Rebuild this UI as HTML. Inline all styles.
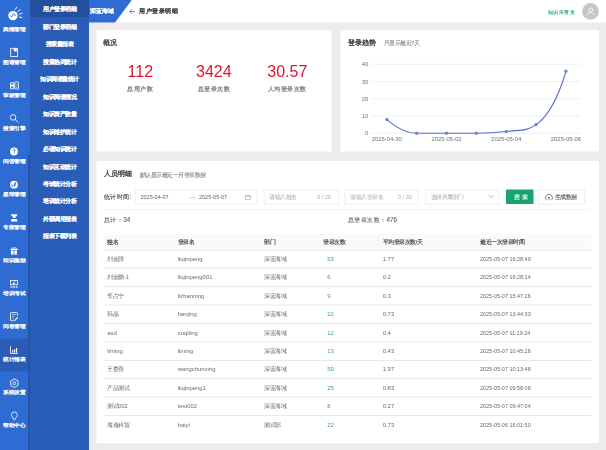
<!DOCTYPE html>
<html><head><meta charset="utf-8"><style>html,body{margin:0;padding:0;width:606px;height:450px;overflow:hidden;background:#ececec}#w{position:absolute;left:0;top:0;width:1212px;height:900px;transform:scale(0.5);transform-origin:0 0;overflow:hidden}
#w{font-family:"Liberation Sans",sans-serif}
#w div,#w svg{position:absolute}
#w div{-webkit-text-stroke:0.24px currentColor}
#w .bd{-webkit-text-stroke:0.1px currentColor}
#w .ttl{-webkit-text-stroke:0.6px currentColor}
#w .gk,#w .stl{-webkit-text-stroke:0.44px currentColor}
#w .th{-webkit-text-stroke:0.28px currentColor}
#w .td,#w .stn,#w .nst,#w .ph,#w .ax{-webkit-text-stroke:0}
#w .lb{-webkit-text-stroke:0.64px currentColor}
#w .m2{-webkit-text-stroke:0.2px currentColor}
.lb{left:0;width:56px;text-align:center;color:#fff;font-size:10.8px;line-height:12px;white-space:nowrap;transform:scaleY(0.86)}
.m2{left:60px;width:118px;text-align:center;color:#fff;font-size:11.2px;white-space:nowrap;line-height:16px;font-weight:bold}
.card{background:#fff}
.ttl{font-size:14px;color:#333;white-space:nowrap;line-height:16px;font-weight:normal}
.sub{font-size:11px;color:#999;white-space:nowrap;line-height:12px}
.stn{width:147.2px;text-align:center;font-size:32px;color:#e0142c;line-height:32px;white-space:nowrap}
.stl{width:147.2px;text-align:center;font-size:12.6px;color:#7a7a7a;line-height:16px;white-space:nowrap}
.inp{border:1px solid #dedede;border-radius:1px;background:#fff;height:28.4px;top:378.8px}
.ph{font-size:11px;color:#a8a8a8;white-space:nowrap;line-height:12px}
.th{font-size:11.2px;color:#3a3a3a;white-space:nowrap;line-height:12px}
.td{font-size:11.2px;color:#6a6a6a;white-space:nowrap;line-height:12px}
.g{color:#2aa982}
.ax{font-size:11.8px;color:#6e7079;white-space:nowrap;line-height:14px}
</style></head><body><div id="w">
<div style="left:0;top:0;width:60px;height:900px;background:#2e6bd2"></div>
<div style="left:0;top:676.6px;width:56px;height:66.8px;background:#2a5cb5"></div>
<div style="left:56px;top:310px;width:4px;height:590px;background:#2753a6"></div>
<div style="left:60px;top:0;width:118px;height:900px;background:#2a5db8"></div>
<div style="left:60px;top:0;width:118px;height:34px;background:#244f9e"></div>
<div class="lb" style="top:51.8px">舆情管理</div>
<div class="lb" style="top:117.86px">图谱管理</div>
<div class="lb" style="top:183.92px">审核管理</div>
<div class="lb" style="top:249.98px">搜索引擎</div>
<div class="lb" style="top:316.04px">问答管理</div>
<div class="lb" style="top:382.1px">星球管理</div>
<div class="lb" style="top:448.16px">专家管理</div>
<div class="lb" style="top:514.22px">知识激励</div>
<div class="lb" style="top:580.28px">培训考试</div>
<div class="lb" style="top:646.34px">问卷管理</div>
<div class="lb" style="top:712.4px">统计报表</div>
<div class="lb" style="top:778.46px">系统设置</div>
<div class="lb" style="top:844.52px">帮助中心</div>
<svg style="left:0;top:0" width="60px" height="900px" viewBox="0 0 30 450"><circle cx="13" cy="15.6" r="4.7" fill="#ffffff"/><polyline points="10.3,15.5 11.7,16.9 13.7,13.8 15.7,16" stroke="#2e6bd2" stroke-width="0.9" fill="none" stroke-linejoin="round"/><line x1="15.2" y1="9.6" x2="16.8" y2="7.3" stroke="#ffffff" stroke-width="0.9" stroke-linecap="round"/><line x1="18.1" y1="11.3" x2="20.3" y2="9.6" stroke="#ffffff" stroke-width="0.9" stroke-linecap="round"/><line x1="19.4" y1="14.2" x2="21.9" y2="13.3" stroke="#ffffff" stroke-width="0.9" stroke-linecap="round"/><line x1="19.4" y1="17.1" x2="21.9" y2="17.6" stroke="#ffffff" stroke-width="0.9" stroke-linecap="round"/><rect x="10.7" y="48.3" width="6.8" height="8.2" fill="none" stroke="#ffffff" stroke-width="0.85"/><rect x="13.8" y="48.6" width="3" height="2.8" fill="#ffffff"/><rect x="10" y="82.2" width="4.3" height="7.1" rx="1.3" fill="#ffffff"/><rect x="11" y="83" width="2.4" height="1.5" rx="0.5" fill="#2e6bd2"/><rect x="11" y="86.4" width="2.4" height="2" rx="0.6" fill="#2e6bd2"/><rect x="14.8" y="81.9" width="3.7" height="7.2" rx="0.4" fill="none" stroke="#ffffff" stroke-width="0.8"/><line x1="15.8" y1="84.2" x2="17.5" y2="84.2" stroke="#ffffff" stroke-width="0.5"/><line x1="15.8" y1="85.9" x2="17.5" y2="85.9" stroke="#ffffff" stroke-width="0.5"/><line x1="15.8" y1="87.5" x2="17.5" y2="87.5" stroke="#ffffff" stroke-width="0.5"/><circle cx="13.1" cy="117.4" r="2.8" fill="none" stroke="#ffffff" stroke-width="0.85"/><line x1="15.1" y1="119.4" x2="17.9" y2="122.2" stroke="#ffffff" stroke-width="0.85" stroke-linecap="round"/><circle cx="14" cy="151.5" r="3.9" fill="#ffffff"/><path d="M12.9,150.4 Q13,149.1 14.1,149.1 Q15.3,149.2 15.2,150.3 Q15.1,151.1 14.2,151.5 L14.2,152.6" stroke="#2e6bd2" stroke-width="0.8" fill="none"/><circle cx="14.2" cy="153.8" r="0.45" fill="#2e6bd2"/><circle cx="14" cy="184.7" r="3.9" fill="#ffffff"/><path d="M15.2,181.4 Q16.4,182.6 15.6,184.2 Q15.4,186 14.8,187.4 Q14.4,185.6 13.6,185 Q14.6,183.2 15.2,181.4 Z" fill="#2e6bd2"/><path d="M11.2,183.8 Q12.6,184.6 13,186.4 L12.4,187.2 Q11.4,185.8 11.2,183.8 Z" fill="#2e6bd2"/><path d="M10.8,214.3 L17.6,214.3 L16.6,216.2 L15.6,216.4 L15.2,218 L13.2,218 L12.8,216.4 L11.8,216.2 Z" fill="#ffffff"/><path d="M10.9,221.6 L11.2,219.6 Q11.6,219 12.4,219 L16,219 Q16.8,219 17.1,219.6 L17.3,221.6 Z" fill="#ffffff"/><rect x="10.6" y="248.6" width="7.1" height="1.5" fill="#ffffff"/><rect x="11" y="250.5" width="2.6" height="4.1" fill="#ffffff"/><rect x="14.4" y="250.5" width="2.6" height="4.1" fill="#ffffff"/><path d="M12,248.3 Q12,246.8 14.1,248.2 Q16.2,246.8 16.2,248.3" stroke="#ffffff" stroke-width="0.7" fill="none"/><rect x="10.5" y="280.4" width="7" height="4.3" fill="none" stroke="#ffffff" stroke-width="0.8"/><path d="M12.2,284.5 L13.7,282 L15.2,284.5 Z" fill="#ffffff"/><circle cx="14.8" cy="281.8" r="0.6" fill="#ffffff"/><rect x="10.5" y="286.2" width="1.8" height="1.4" fill="#ffffff"/><rect x="13.1" y="286.2" width="1.8" height="1.4" fill="#ffffff"/><rect x="15.7" y="286.2" width="1.8" height="1.4" fill="#ffffff"/><path d="M17.4,316 L17.4,313.2 Q17.4,312.6 16.8,312.6 L11.1,312.6 Q10.5,312.6 10.5,313.2 L10.5,320.1 Q10.5,320.7 11.1,320.7 L13.6,320.7" stroke="#ffffff" stroke-width="0.85" fill="none"/><line x1="12.2" y1="314.6" x2="15.6" y2="314.6" stroke="#ffffff" stroke-width="0.6"/><line x1="12.2" y1="316.4" x2="14.6" y2="316.4" stroke="#ffffff" stroke-width="0.6"/><line x1="12.2" y1="318.2" x2="13.6" y2="318.2" stroke="#ffffff" stroke-width="0.6"/><line x1="17.4" y1="317.6" x2="14.6" y2="320.6" stroke="#ffffff" stroke-width="1.1" stroke-linecap="round"/><path d="M10.5,346.3 L10.5,353.4 L18.1,353.4" stroke="#ffffff" stroke-width="0.85" fill="none"/><rect x="12.2" y="350" width="1.1" height="2.6" fill="#ffffff"/><rect x="14.1" y="349.2" width="1.1" height="3.4" fill="#ffffff"/><rect x="16" y="348" width="1.1" height="4.6" fill="#ffffff"/><path d="M14.30,378.90 L18.02,381.05 L18.02,385.35 L14.30,387.50 L10.58,385.35 L10.58,381.05 Z" stroke="#ffffff" stroke-width="0.85" fill="none" stroke-linejoin="round"/><circle cx="14.3" cy="383.2" r="1.4" fill="none" stroke="#ffffff" stroke-width="0.85"/><path d="M14.35,420.2 L12.1,416.6 Q11.2,415.2 11.4,414.4 Q11.8,411.9 14.35,411.9 Q16.9,411.9 17.3,414.4 Q17.5,415.2 16.6,416.6 Z" stroke="#ffffff" stroke-width="0.85" fill="none" stroke-linejoin="round"/></svg>
<div class="m2" style="top:10.4px">用户登录明细</div>
<div class="m2" style="top:45.3px">部门登录明细</div>
<div class="m2" style="top:80.2px">搜索量报表</div>
<div class="m2" style="top:115.1px">搜索热词统计</div>
<div class="m2" style="top:150px">知识阅读量统计</div>
<div class="m2" style="top:184.9px">知识阅读情况</div>
<div class="m2" style="top:219.8px">知识资产数量</div>
<div class="m2" style="top:254.7px">知识维护统计</div>
<div class="m2" style="top:289.6px">必读知识统计</div>
<div class="m2" style="top:324.5px">知识互动统计</div>
<div class="m2" style="top:359.4px">考试统计分析</div>
<div class="m2" style="top:394.3px">培训统计分析</div>
<div class="m2" style="top:429.2px">外部调用报表</div>
<div class="m2" style="top:464.1px">报表下载列表</div>
<div style="left:178px;top:0;width:1034px;height:45.2px;background:#fff"></div>
<svg style="left:178px;top:0" width="88px" height="46px" viewBox="0 0 44 23"><polygon points="0,0 42.8,0 26,22.6 0,22.6" fill="#2e6bd2"/></svg>
<div class="bd" style="left:180px;top:13px;font-size:12.3px;line-height:16px;color:#fff;font-weight:bold;white-space:nowrap">深蓝海域</div>
<svg style="left:258px;top:17px" width="14px" height="12px" viewBox="0 0 7 6"><path d="M3,0.7 L0.8,3 L3,5.3 M0.8,3 H6" stroke="#2e6bd2" stroke-width="0.75" fill="none"/></svg>
<div class="bd" style="left:278.4px;top:14.2px;font-size:12.8px;line-height:16px;color:#3a3a3a;font-weight:bold;white-space:nowrap">用户登录明细</div>
<div style="left:1095.2px;top:17px;font-size:10.6px;line-height:14px;color:#2aa982;white-space:nowrap">知识库首页</div>
<svg style="left:1164px;top:5.6px" width="34px" height="34px" viewBox="0 0 17 17"><circle cx="8.5" cy="8.4" r="8.3" fill="#c6c6c6"/><circle cx="8.6" cy="7.0" r="2.0" fill="none" stroke="#fff" stroke-width="0.8"/><path d="M5.1,12.1 Q5.6,9.6 8.6,9.4 Q11.6,9.6 12.1,12.1" stroke="#fff" stroke-width="0.8" fill="none"/></svg>
<div class="card" style="left:192.6px;top:60px;width:470.6px;height:242.6px"></div>
<div class="card" style="left:681px;top:60px;width:517.4px;height:242.6px"></div>
<div class="card" style="left:192.6px;top:321.8px;width:1005.8px;height:563.8px"></div>
<div class="ttl gk" style="left:206.6px;top:77px;font-weight:normal">概况</div>
<div class="stn" style="left:207px;top:127px">112</div>
<div class="stl" style="left:207px;top:169.6px">总用户数</div>
<div class="stn" style="left:354px;top:127px">3424</div>
<div class="stl" style="left:354px;top:169.6px">总登录次数</div>
<div class="stn" style="left:501px;top:127px">30.57</div>
<div class="stl" style="left:501px;top:169.6px">人均登录次数</div>
<div class="ttl" style="left:695px;top:76.8px">登录趋势</div>
<div class="sub" style="left:767.6px;top:79.4px;color:#8a8a8a">只显示最近7天</div>
<svg style="left:0;top:0" width="1212px" height="900px" viewBox="0 0 606 450"><line x1="372" y1="133.25" x2="580.5" y2="133.25" stroke="#e0e6f1" stroke-width="0.6"/><line x1="372" y1="116.00" x2="580.5" y2="116.00" stroke="#e0e6f1" stroke-width="0.6"/><line x1="372" y1="98.75" x2="580.5" y2="98.75" stroke="#e0e6f1" stroke-width="0.6"/><line x1="372" y1="81.50" x2="580.5" y2="81.50" stroke="#e0e6f1" stroke-width="0.6"/><line x1="372" y1="64.25" x2="580.5" y2="64.25" stroke="#e0e6f1" stroke-width="0.6"/><path d="M386.80,119.45 C386.80,119.45 401.00,133.25 416.65,133.25 C430.85,133.25 431.58,133.25 446.50,133.25 C461.42,133.25 461.44,133.25 476.35,133.25 C491.29,133.25 491.46,133.25 506.20,131.53 C521.31,129.76 526.10,131.53 536.05,124.62 C555.95,110.83 565.90,71.15 565.90,71.15" stroke="#5470c6" stroke-width="1.1" fill="none"/><circle cx="386.80" cy="119.45" r="1.2" fill="#7d92d6" stroke="#5470c6" stroke-width="0.8"/><circle cx="416.65" cy="133.25" r="1.2" fill="#7d92d6" stroke="#5470c6" stroke-width="0.8"/><circle cx="446.50" cy="133.25" r="1.2" fill="#7d92d6" stroke="#5470c6" stroke-width="0.8"/><circle cx="476.35" cy="133.25" r="1.2" fill="#7d92d6" stroke="#5470c6" stroke-width="0.8"/><circle cx="506.20" cy="131.53" r="1.2" fill="#7d92d6" stroke="#5470c6" stroke-width="0.8"/><circle cx="536.05" cy="124.62" r="1.2" fill="#7d92d6" stroke="#5470c6" stroke-width="0.8"/><circle cx="565.90" cy="71.15" r="1.2" fill="#7d92d6" stroke="#5470c6" stroke-width="0.8"/></svg>
<div class="ax" style="left:676px;width:60.4px;text-align:right;top:259.3px">0</div>
<div class="ax" style="left:676px;width:60.4px;text-align:right;top:224.8px">10</div>
<div class="ax" style="left:676px;width:60.4px;text-align:right;top:190.3px">20</div>
<div class="ax" style="left:676px;width:60.4px;text-align:right;top:155.8px">30</div>
<div class="ax" style="left:676px;width:60.4px;text-align:right;top:121.3px">40</div>
<div class="ax" style="left:733.6px;width:80px;text-align:center;top:271.2px">2025-04-30</div>
<div class="ax" style="left:853px;width:80px;text-align:center;top:271.2px">2025-05-02</div>
<div class="ax" style="left:972.4px;width:80px;text-align:center;top:271.2px">2025-05-04</div>
<div class="ax" style="left:1091.8px;width:80px;text-align:center;top:271.2px">2025-05-06</div>
<div class="ttl" style="left:207.4px;top:338.6px">人员明细</div>
<div class="sub" style="left:279.4px;top:343.4px;color:#888">默认显示最近一月登录数据</div>
<div style="left:207.4px;top:387.4px;font-size:12.6px;line-height:14px;color:#444;white-space:nowrap">统计时间:</div>
<div class="inp" style="left:270px;width:242.4px"></div>
<div class="ph" style="left:281px;top:387.4px;color:#606266">2025-04-07</div>
<svg style="left:377px;top:390px" width="16px" height="10px" viewBox="0 0 8 5"><path d="M1,2.6 H6.6 M5,1.2 L6.6,2.6 L5,4" stroke="#aaa" stroke-width="0.5" fill="none"/></svg>
<div class="ph" style="left:398px;top:387.4px;color:#606266">2025-05-07</div>
<svg style="left:489px;top:389px" width="14px" height="12px" viewBox="0 0 7 6"><rect x="1.1" y="1.1" width="5" height="4" fill="none" stroke="#999" stroke-width="0.5"/><line x1="1.1" y1="2.1" x2="6.1" y2="2.1" stroke="#999" stroke-width="0.5"/></svg>
<div class="inp" style="left:527.6px;width:148px"></div>
<div class="ph" style="left:538.6px;top:387.4px">请输入姓名</div>
<div class="ph" style="left:634.4px;top:387.4px">0 / 20</div>
<div class="inp" style="left:689px;width:146.4px"></div>
<div class="ph" style="left:700.6px;top:387.4px">请输入登录名</div>
<div class="ph" style="left:796px;top:387.4px">0 / 20</div>
<div class="inp" style="left:851.4px;width:145.2px"></div>
<div class="ph" style="left:861.4px;top:387.4px">选择所属部门</div>
<svg style="left:975.6px;top:388px" width="14px" height="10px" viewBox="0 0 7 5"><path d="M0.7,0.9 L3.4,3.9 L6.1,0.9" stroke="#a0a0a0" stroke-width="0.6" fill="none"/></svg>
<div style="left:1012.2px;top:378.6px;width:55px;height:29.2px;background:#18a46c;border-radius:1.6px"></div>
<div style="left:1014px;top:387.4px;width:55px;text-align:center;font-size:11px;line-height:12px;color:#fff;white-space:nowrap">搜 索</div>
<div style="left:1077px;top:378.8px;width:91px;height:28.4px;background:#fff;border:1px solid #dadada;border-radius:1px"></div>
<svg style="left:1089px;top:386px" width="18px" height="16px" viewBox="0 0 9 8"><path d="M2.3,6.3 Q0.6,6.2 0.7,4.6 Q0.8,3.3 2.1,3.2 Q2.6,1.1 4.5,1.1 Q6.5,1.2 6.8,3.2 Q8.3,3.4 8.2,4.8 Q8.1,6.2 6.7,6.3" stroke="#555" stroke-width="0.75" fill="none"/><path d="M4.5,7.3 L4.5,4 M3.3,5.1 L4.5,3.9 L5.7,5.1" stroke="#555" stroke-width="0.75" fill="none"/></svg>
<div style="left:1109px;top:387.6px;font-size:11px;line-height:12px;color:#555;white-space:nowrap">生成数据</div>
<div style="left:207.4px;top:418px;width:976px;height:1.2px;background:#e9e9e9"></div>
<div style="left:207.4px;top:433px;font-size:12.6px;line-height:14px;color:#666;white-space:nowrap">总计：34</div>
<div style="left:695px;top:433px;font-size:12.6px;line-height:14px;color:#666;white-space:nowrap">总登录次数：476</div>
<div style="left:207px;top:468px;width:976px;height:30.6px;background:#fafafa"></div>
<div style="left:346.4px;top:472px;width:1.2px;height:19px;background:#f1f1f1"></div>
<div style="left:519px;top:472px;width:1.2px;height:19px;background:#f1f1f1"></div>
<div style="left:637.6px;top:472px;width:1.2px;height:19px;background:#f1f1f1"></div>
<div style="left:756.4px;top:472px;width:1.2px;height:19px;background:#f1f1f1"></div>
<div style="left:951px;top:472px;width:1.2px;height:19px;background:#f1f1f1"></div>
<div class="th" style="left:214.6px;top:478px">姓名</div>
<div class="th" style="left:355.4px;top:478px">登录名</div>
<div class="th" style="left:528px;top:478px">部门</div>
<div class="th" style="left:646.6px;top:478px">登录次数</div>
<div class="th" style="left:765.4px;top:478px">平均登录次数/天</div>
<div class="th" style="left:960px;top:478px">最近一次登录时间</div>
<div style="left:207px;top:498.6px;width:976px;height:2px;background:#e9e9e9"></div>
<div class="td" style="left:214.6px;top:511.4px;">刘金牌</div>
<div class="td" style="left:355.4px;top:511.4px;font-size:11.8px;">liujinpeng</div>
<div class="td" style="left:528px;top:511.4px;">深蓝海域</div>
<div class="td g" style="left:654.6px;top:511.4px;font-size:11.8px;">53</div>
<div class="td" style="left:765.4px;top:511.4px;font-size:11.8px;">1.77</div>
<div class="td" style="left:960px;top:511.4px;font-size:11px;letter-spacing:-0.04px;">2025-05-07 16:28:49</div>
<div style="left:207px;top:535.42px;width:976px;height:2px;background:#e9e9e9"></div>
<div class="td" style="left:214.6px;top:548.22px;">刘金鹏-1</div>
<div class="td" style="left:355.4px;top:548.22px;font-size:11.8px;">liujinpeng001</div>
<div class="td" style="left:528px;top:548.22px;">深蓝海域</div>
<div class="td g" style="left:654.6px;top:548.22px;font-size:11.8px;">6</div>
<div class="td" style="left:765.4px;top:548.22px;font-size:11.8px;">0.2</div>
<div class="td" style="left:960px;top:548.22px;font-size:11px;letter-spacing:-0.04px;">2025-05-07 16:28:14</div>
<div style="left:207px;top:572.24px;width:976px;height:2px;background:#e9e9e9"></div>
<div class="td" style="left:214.6px;top:585.04px;">李占宁</div>
<div class="td" style="left:355.4px;top:585.04px;font-size:11.8px;">lizhanning</div>
<div class="td" style="left:528px;top:585.04px;">深蓝海域</div>
<div class="td g" style="left:654.6px;top:585.04px;font-size:11.8px;">9</div>
<div class="td" style="left:765.4px;top:585.04px;font-size:11.8px;">0.3</div>
<div class="td" style="left:960px;top:585.04px;font-size:11px;letter-spacing:-0.04px;">2025-05-07 15:47:26</div>
<div style="left:207px;top:609.06px;width:976px;height:2px;background:#e9e9e9"></div>
<div class="td" style="left:214.6px;top:621.86px;">韩晶</div>
<div class="td" style="left:355.4px;top:621.86px;font-size:11.8px;">hanjing</div>
<div class="td" style="left:528px;top:621.86px;">深蓝海域</div>
<div class="td g" style="left:654.6px;top:621.86px;font-size:11.8px;">22</div>
<div class="td" style="left:765.4px;top:621.86px;font-size:11.8px;">0.73</div>
<div class="td" style="left:960px;top:621.86px;font-size:11px;letter-spacing:-0.04px;">2025-05-07 13:44:33</div>
<div style="left:207px;top:645.88px;width:976px;height:2px;background:#e9e9e9"></div>
<div class="td" style="left:214.6px;top:658.68px;font-size:11.8px;">asd</div>
<div class="td" style="left:355.4px;top:658.68px;font-size:11.8px;">xuqiling</div>
<div class="td" style="left:528px;top:658.68px;">深蓝海域</div>
<div class="td g" style="left:654.6px;top:658.68px;font-size:11.8px;">12</div>
<div class="td" style="left:765.4px;top:658.68px;font-size:11.8px;">0.4</div>
<div class="td" style="left:960px;top:658.68px;font-size:11px;letter-spacing:-0.04px;">2025-05-07 11:19:24</div>
<div style="left:207px;top:682.7px;width:976px;height:2px;background:#e9e9e9"></div>
<div class="td" style="left:214.6px;top:695.5px;font-size:11.8px;">liming</div>
<div class="td" style="left:355.4px;top:695.5px;font-size:11.8px;">liming</div>
<div class="td" style="left:528px;top:695.5px;">深蓝海域</div>
<div class="td g" style="left:654.6px;top:695.5px;font-size:11.8px;">13</div>
<div class="td" style="left:765.4px;top:695.5px;font-size:11.8px;">0.43</div>
<div class="td" style="left:960px;top:695.5px;font-size:11px;letter-spacing:-0.04px;">2025-05-07 10:45:26</div>
<div style="left:207px;top:719.52px;width:976px;height:2px;background:#e9e9e9"></div>
<div class="td" style="left:214.6px;top:732.32px;">王春香</div>
<div class="td" style="left:355.4px;top:732.32px;font-size:11.8px;">wangchunxing</div>
<div class="td" style="left:528px;top:732.32px;">深蓝海域</div>
<div class="td g" style="left:654.6px;top:732.32px;font-size:11.8px;">59</div>
<div class="td" style="left:765.4px;top:732.32px;font-size:11.8px;">1.97</div>
<div class="td" style="left:960px;top:732.32px;font-size:11px;letter-spacing:-0.04px;">2025-05-07 10:13:48</div>
<div style="left:207px;top:756.34px;width:976px;height:2px;background:#e9e9e9"></div>
<div class="td" style="left:214.6px;top:769.14px;">产品测试</div>
<div class="td" style="left:355.4px;top:769.14px;font-size:11.8px;">liujinpeng1</div>
<div class="td" style="left:528px;top:769.14px;">深蓝海域</div>
<div class="td g" style="left:654.6px;top:769.14px;font-size:11.8px;">25</div>
<div class="td" style="left:765.4px;top:769.14px;font-size:11.8px;">0.83</div>
<div class="td" style="left:960px;top:769.14px;font-size:11px;letter-spacing:-0.04px;">2025-05-07 09:58:06</div>
<div style="left:207px;top:793.16px;width:976px;height:2px;background:#e9e9e9"></div>
<div class="td" style="left:214.6px;top:805.96px;">测试002</div>
<div class="td" style="left:355.4px;top:805.96px;font-size:11.8px;">test002</div>
<div class="td" style="left:528px;top:805.96px;">深蓝海域</div>
<div class="td g" style="left:654.6px;top:805.96px;font-size:11.8px;">8</div>
<div class="td" style="left:765.4px;top:805.96px;font-size:11.8px;">0.27</div>
<div class="td" style="left:960px;top:805.96px;font-size:11px;letter-spacing:-0.04px;">2025-05-07 09:47:04</div>
<div style="left:207px;top:829.98px;width:976px;height:2px;background:#e9e9e9"></div>
<div class="td" style="left:214.6px;top:842.78px;">海逸科贸</div>
<div class="td" style="left:355.4px;top:842.78px;font-size:11.8px;">haiyi</div>
<div class="td" style="left:528px;top:842.78px;">测试部</div>
<div class="td g" style="left:654.6px;top:842.78px;font-size:11.8px;">22</div>
<div class="td" style="left:765.4px;top:842.78px;font-size:11.8px;">0.73</div>
<div class="td" style="left:960px;top:842.78px;font-size:11px;letter-spacing:-0.04px;">2025-05-06 16:01:50</div>
</div></body></html>
